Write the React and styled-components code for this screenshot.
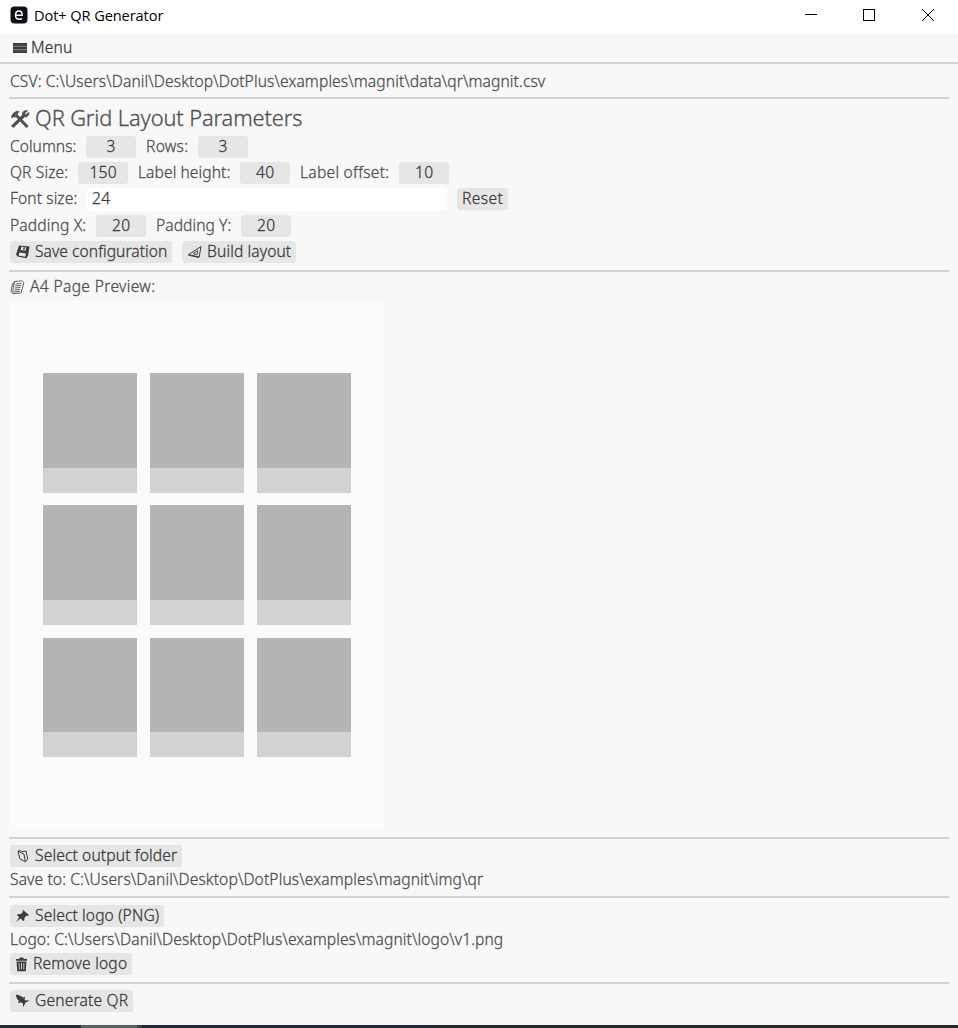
import React, { useLayoutEffect, useRef, useState } from "react";
import styled, { createGlobalStyle } from "styled-components";

const Global = createGlobalStyle`
  * { box-sizing: border-box; }
  body { margin: 0; background: #f8f8f8; overflow: hidden; }
`;
const Window = styled.div`
  width: 958px; height: 1028px; display: flex; flex-direction: column;
  background: #f8f8f8; color: #505050; -webkit-text-stroke: 0.3px currentColor;
  font-family: "Noto Sans", "Open Sans", sans-serif; font-weight: 300; font-size: 15.6px;
`;
const TitleBar = styled.header`
  height: 34px; flex: none; display: flex; align-items: center; padding: 0 0 4px 10px;
  background: #fff; color: #000; -webkit-text-stroke: 0;
`;
const TitleText = styled.div`
  flex: 1; margin-left: 6px; padding-top: 2px; display: flex;
  font-family: "Open Sans", sans-serif; font-size: 14.6px; font-weight: 400;
`;
const Controls = styled.div`
  display: flex; gap: 46px; padding-right: 24px;
  & > :last-child { margin-left: 1px; }
`;
const MenuBar = styled.nav`
  height: 30px; flex: none; display: flex; align-items: center; padding: 0 13px;
  border-bottom: 2px solid #d2d2d2; color: #3c3c3c;
`;
const Content = styled.main`flex: 1; display: flex; flex-direction: column; padding: 0 9px;`;
const Section = styled.section`
  height: ${(p) => p.$h}px; flex: none; display: flex; flex-direction: column;
  padding: ${(p) => p.$top || 0}px 0 0 1px; gap: ${(p) => p.$gap || 0}px;
  border-bottom: ${(p) => (p.$last ? "none" : "2px solid #d2d2d2")};
`;
const Row = styled.div`height: ${(p) => p.$h || 22}px; flex: none; display: flex; align-items: center; gap: ${(p) => p.$gap || 10}px;`;
const Heading = styled.h1`
  height: 32px; flex: none; margin: 0; display: flex; align-items: center; gap: 5px; padding-top: 3px;
  font-size: 21.8px; font-weight: inherit;
`;
const Value = styled.div`
  width: 50px; height: 22px; border-radius: 3px; background: #e6e6e6; color: #3c3c3c;
  display: flex; align-items: center; justify-content: center;
`;
const Field = styled.div`
  width: 360px; height: 23px; padding: 0 5px; border-radius: 3px; background: #fff; color: #3c3c3c;
  display: flex; align-items: center;
`;
const Button = styled.button`
  width: ${(p) => p.$w}px; height: 22px; flex: none; border: 0; padding: 0 5px; border-radius: 3px;
  background: #e6e6e6; color: #3c3c3c; font: inherit; display: flex; align-items: center; justify-content: space-between;
`;
const Fitted = styled.span`display: block; flex: none; width: ${(p) => p.$w}px; white-space: pre; line-height: 20px; padding-bottom: 2px;`;
const Glyph = styled.svg`display: block; flex: none; overflow: visible;`;
const Page = styled.div`
  width: 374px; height: 530px; flex: none; background: #fbfbfb; padding: 73px 33px;
  display: grid; grid-template-columns: repeat(3, 94px); grid-auto-rows: 119.5px; gap: 12.8px 13px;
`;
const Cell = styled.div`display: grid; grid-template-rows: 94.6px 24.9px; background: #d2d2d2;`;
const Code = styled.div`background: #b4b4b4;`;
const Taskbar = styled.footer`
  height: 3px; flex: none; background: linear-gradient(90deg, #263036 0 81px, #586062 81px 137px, #3b4144 137px 142px, #202a31 142px, #292929);
`;

/* Tracks its text so that it fills exactly the given width. */
function Text({ w, children }) {
  const ref = useRef(null);
  const [spacing, setSpacing] = useState(0);
  useLayoutEffect(() => {
    const range = document.createRange();
    range.selectNodeContents(ref.current);
    setSpacing((w + 0.3 - range.getBoundingClientRect().width) / children.length);
  }, [w, children]);
  return <Fitted ref={ref} $w={w} style={{ letterSpacing: spacing }}>{children}</Fitted>;
}

const AppIcon = () => (
  <Glyph width="18" height="18" viewBox="0 0 18 18">
    <rect x="0.5" y="0.5" width="17" height="17" rx="4" fill="#0d1117" />
    <path d="M5.3 9.2H12.2C12.2 6.5 11.1 5 9 5S5.5 6.7 5.5 9.2 6.9 13.2 9.3 13.2C10.5 13.2 11.4 13 12 12.6" fill="none" stroke="#fff" strokeWidth="1.4" />
  </Glyph>
);
const MenuIcon = () => (
  <Glyph width="14" height="12" viewBox="0 0 14 12" fill="#3c3c3c">
    <rect y="1" width="14" height="10" fill="#8c8c8c" />
    <rect y="1" width="14" height="2.7" /><rect y="4.7" width="14" height="2.6" /><rect y="8.3" width="14" height="2.7" />
  </Glyph>
);
const ToolsIcon = () => (
  <Glyph width="20" height="20" viewBox="0 0 20 20" fill="none" stroke="#505050">
    <path d="M6 6L17.5 18" strokeWidth="3" /><path d="M1.5 7.5L3 4.5 7 2 9 2.7 6.7 5.2 7.4 6.4 4.6 8.4 3.8 7.5 2 9Z" fill="#505050" strokeWidth=".8" />
    <path d="M2.2 17.8L14 6.5" strokeWidth="3.2" /><path d="M17.6 1.8L14.7 4.4 15.8 5.7 18.8 3.3C19.5 6.3 17.4 8.4 14.5 7.8L12.2 5.6C12 2.7 14.5.8 17.6 1.8Z" fill="#505050" strokeWidth=".6" />
  </Glyph>
);
const SaveIcon = () => (
  <Glyph width="15" height="14" viewBox="0 0 15 14">
    <path d="M4 .5L14.6 1.5 13.1 10.3 11.5 13.2 2.4 11.5 1 9.5Z" fill="#3c3c3c" />
    <path d="M6.4 1.7L11.2 2.2 10.5 5.8 5.6 5.1ZM4.4 7.4L11 8.4 10.3 11.7 3.5 10.4Z" fill="#e6e6e6" /><path d="M9.3 2.2L8.8 5" stroke="#3c3c3c" strokeWidth="1.3" />
  </Glyph>
);
const SetSquareIcon = () => (
  <Glyph width="15" height="14" viewBox="0 0 15 14" fill="none" stroke="#3c3c3c">
    <path d="M1.4 9.6L14 1.6 12.2 12Z" strokeWidth="1" /><path d="M6 8.7L10.8 5.6 10.2 9.6Z" strokeWidth=".9" /><path d="M1.4 10.2L12 12.5" />
  </Glyph>
);
const PageIcon = () => (
  <Glyph width="15" height="15" viewBox="0 0 15 15" fill="none" stroke="#505050" strokeWidth=".9">
    <path d="M4.4 1.6L12 .8 13.8 2.8 11.2 12.8 3.2 13.8 1 11.2 2.6 3.6 4 3.4Z" /><path d="M4.4 1.6L2.8 10.6 3.2 13.8M5.6 4.1L11.4 3.4M5.2 6.1L11 5.4M4.8 8.1L10.5 7.4M4.4 10.1L10 9.4M4 12L9.6 11.3" />
  </Glyph>
);
const FolderIcon = () => (
  <Glyph width="16" height="14" viewBox="-2 0 16 14" fill="none" stroke="#3c3c3c" strokeWidth="1">
    <path d="M1 2.2L3.7 1.5 4.7 2.7 9.2 2.2 10.6 10.4 8.3 12.7 2.9 9.9Z" /><path d="M1 2.2L7 5 8.3 12.7" />
  </Glyph>
);
const PinIcon = () => (
  <Glyph width="15" height="14" viewBox="0 0 15 14" fill="#3c3c3c">
    <path d="M8 1L14 5.9 12.8 7 11.6 6.6 9.4 9 9.3 11.4 8.2 12.1 5.5 9.5 1 13 4.2 8.2 2 6 3.2 5 5.8 5 8.1 2.8 7.3 1.7Z" />
  </Glyph>
);
const TrashIcon = () => (
  <Glyph width="13" height="15" viewBox="0 0 13 15">
    <path d="M1 3.7V2H4L5 .5H8L9 2H12V3.7ZM1.6 4.5H11.4L10.8 14.3H2.2Z" fill="#3c3c3c" />
    <path d="M4.2 6V12.5M6.5 6V12.5M8.8 6V12.5" stroke="#e6e6e6" strokeWidth=".8" />
  </Glyph>
);
const RocketIcon = () => (
  <Glyph width="15" height="14" viewBox="0 0 15 14" fill="#3c3c3c">
    <path d="M.8.8C5 .8 8.4 3.2 10.2 6.4L14.3 6.2 12 8 10.6 8.3 9.8 10 8.3 13.3 7.8 9.2C4 8 1.3 5 .8.8Z" />
    <path d="M7.5 3.4L10.2 3 9.6 5.4ZM3.6 6.8L3.4 9.2 6 8.6Z" />
  </Glyph>
);

export default function App() {
  return (
    <Window>
      <Global />
      <TitleBar>
        <AppIcon />
        <TitleText><Text w={129}>Dot+ QR Generator</Text></TitleText>
        <Controls>
          <Glyph width="12" height="12" viewBox="0 0 12 12"><path d="M0 5.5H12" stroke="#000" /></Glyph>
          <Glyph width="12" height="12" viewBox="0 0 12 12"><rect x=".5" y=".5" width="11" height="11" fill="none" stroke="#000" /></Glyph>
          <Glyph width="12" height="12" viewBox="0 0 12 12"><path d="M0 0L12 12M12 0L0 12" stroke="#000" /></Glyph>
        </Controls>
      </TitleBar>
      <MenuBar><Row $gap={4}><MenuIcon /><Text w={41}>Menu</Text></Row></MenuBar>
      <Content>
        <Section $h={35} $top={7}>
          <Row><Text w={535}>{"CSV: C:\\Users\\Danil\\Desktop\\DotPlus\\examples\\magnit\\data\\qr\\magnit.csv"}</Text></Row>
        </Section>
        <Section $h={173} $top={2}>
          <Heading><ToolsIcon /><Text w={267}>QR Grid Layout Parameters</Text></Heading>
          <Row $h={27}>
            <Text w={66}>Columns:</Text><Value><Text w={9}>3</Text></Value>
            <Text w={42}>Rows:</Text><Value><Text w={9}>3</Text></Value>
          </Row>
          <Row $h={26}>
            <Text w={58}>QR Size:</Text><Value><Text w={27}>150</Text></Value>
            <Text w={92}>Label height:</Text><Value><Text w={18}>40</Text></Value>
            <Text w={89}>Label offset:</Text><Value><Text w={18}>10</Text></Value>
          </Row>
          <Row $h={26}>
            <Text w={67}>Font size:</Text><Field><Text w={18}>24</Text></Field>
            <Button $w={51}><Text w={41}>Reset</Text></Button>
          </Row>
          <Row $h={27}>
            <Text w={76}>Padding X:</Text><Value><Text w={18}>20</Text></Value>
            <Text w={75}>Padding Y:</Text><Value><Text w={18}>20</Text></Value>
          </Row>
          <Row $h={26}>
            <Button $w={162}><SaveIcon /><Text w={132}>Save configuration</Text></Button>
            <Button $w={114}><SetSquareIcon /><Text w={84}>Build layout</Text></Button>
          </Row>
        </Section>
        <Section $h={567} $top={2}>
          <Row $h={26} $gap={5}><PageIcon /><Text w={125}>A4 Page Preview:</Text></Row>
          <Page>
            {Array.from({ length: 9 }, (_, i) => <Cell key={i}><Code /></Cell>)}
          </Page>
        </Section>
        <Section $h={59} $top={6} $gap={1}>
          <Button $w={172}><FolderIcon /><Text w={142}>Select output folder</Text></Button>
          <Row $h={24}><Text w={473}>{"Save to: C:\\Users\\Danil\\Desktop\\DotPlus\\examples\\magnit\\img\\qr"}</Text></Row>
        </Section>
        <Section $h={86} $top={7} $gap={1}>
          <Button $w={154}><PinIcon /><Text w={124}>Select logo (PNG)</Text></Button>
          <Row $h={24}><Text w={493}>{"Logo: C:\\Users\\Danil\\Desktop\\DotPlus\\examples\\magnit\\logo\\v1.png"}</Text></Row>
          <Button $w={122}><TrashIcon /><Text w={94}>Remove logo</Text></Button>
        </Section>
        <Section $h={41} $top={6} $last>
          <Button $w={123}><RocketIcon /><Text w={93}>Generate QR</Text></Button>
        </Section>
      </Content>
      <Taskbar />
    </Window>
  );
}
